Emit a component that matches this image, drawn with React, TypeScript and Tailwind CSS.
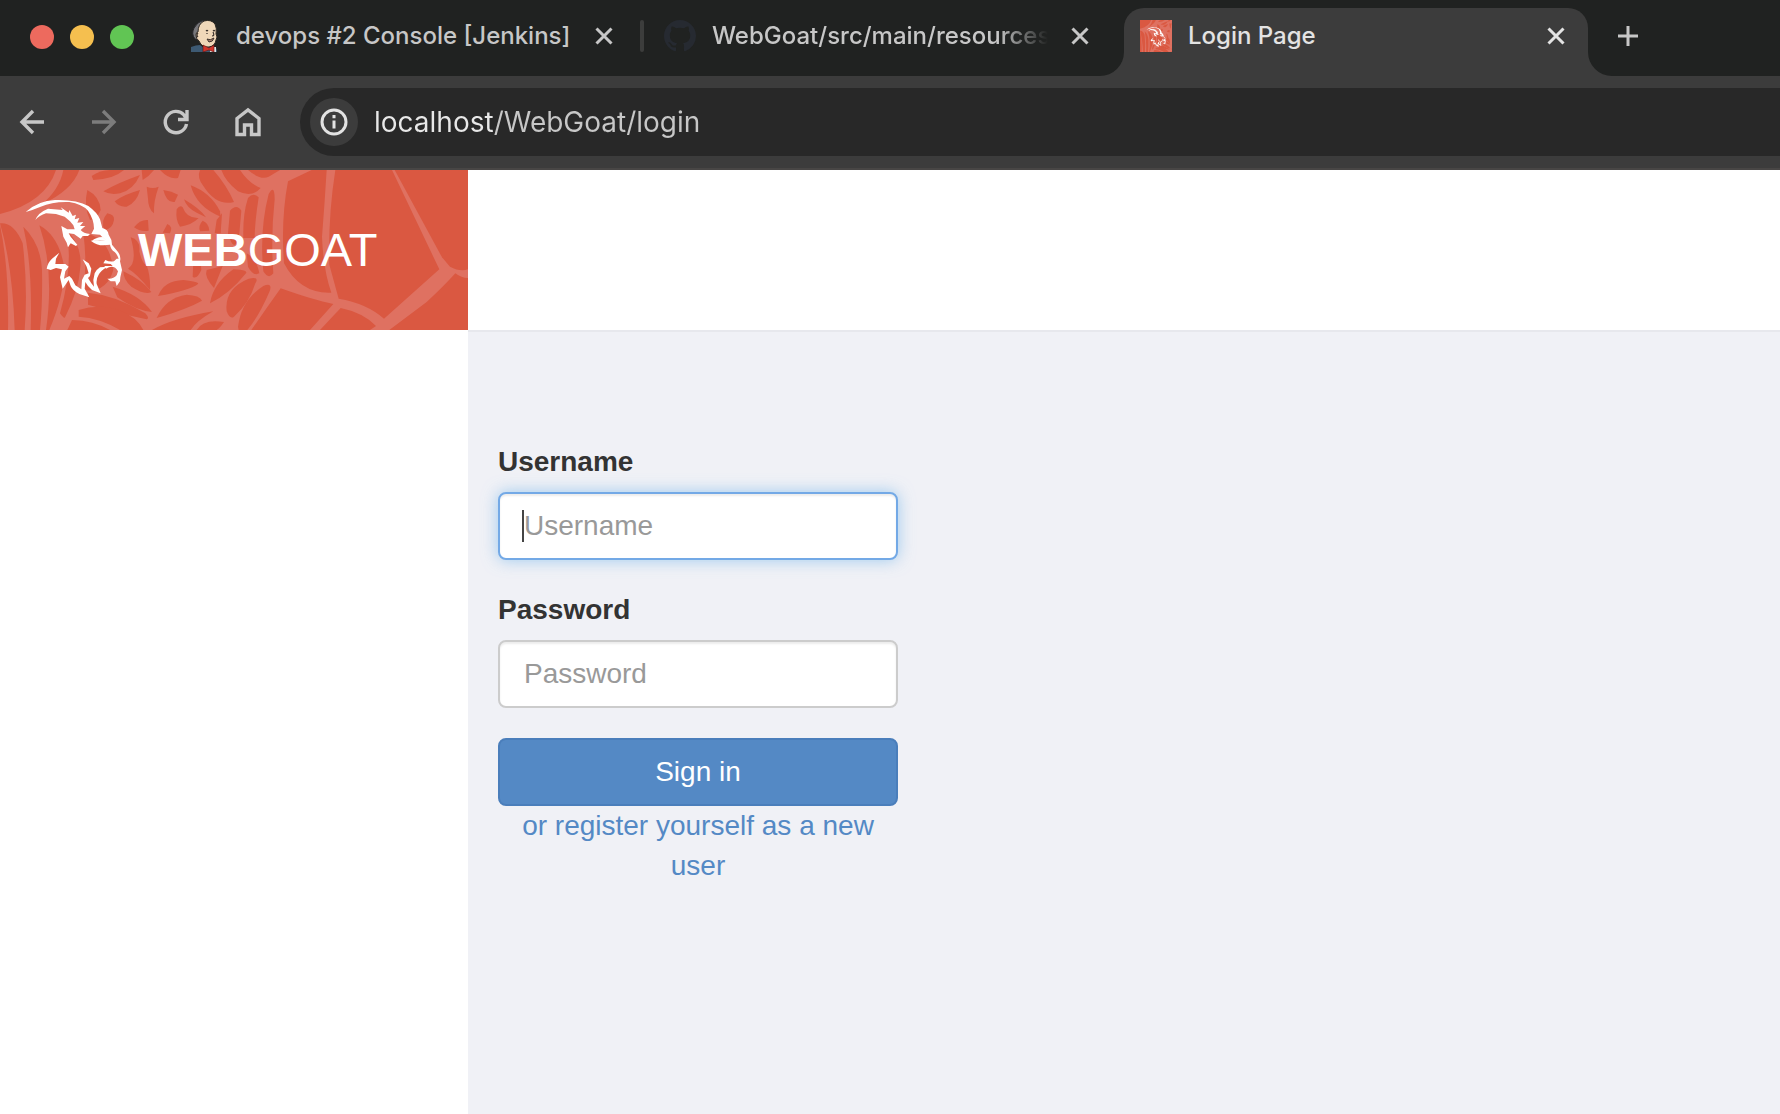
// App.tsx
import React, { useState } from "react";

function JenkinsIcon() {
  return (
    <svg viewBox="0 0 32 32" className="size-8 shrink-0" aria-hidden="true">
      <path d="M3 32V27Q8 25 12 25L16 28 22 26 27 27Q29 28 29 32Z" fill="#3d5a73" />
      <path d="M7 19Q3 14 6 8Q9 2 16 0L12 9 10 20Z" fill="#77777b" stroke="#26262a" strokeWidth="1" />
      <path
        d="M10 12Q10 4 16 1Q23-1 27 4Q29 8 28 14Q30 17 28 20Q27 26 21 27Q14 28 11 21Q8 19 8 15Q8 12 10 12Z"
        fill="#f0d8b9"
        stroke="#2d2822"
        strokeWidth="1"
      />
      <path d="M10 13Q8 15 10 17M18 11q1-1 2 0M25 11q1-1 2 0M19 13v1M25 12q2 4-1 4" fill="none" stroke="#3a302a" strokeWidth="1.2" />
      <path d="M19 19Q22 21 26 18Q25 22 21 22Z" fill="#b98774" stroke="#3a302a" strokeWidth="1" />
      <path d="M22 27h6v5h-6z" fill="#e6e6e6" />
      <path d="M15 25l6 3 5-3v7l-5-2-6 2z" fill="#d2352c" stroke="#5d1512" strokeWidth=".6" />
    </svg>
  );
}

function GithubIcon() {
  return (
    <svg viewBox="0 0 16 16" className="size-8 shrink-0" fill="#262a31" aria-hidden="true">
      <path d="M8 0C3.58 0 0 3.58 0 8c0 3.54 2.29 6.53 5.47 7.59.4.07.55-.17.55-.38 0-.19-.01-.82-.01-1.49-2.01.37-2.53-.49-2.69-.94-.09-.23-.48-.94-.82-1.13-.28-.15-.68-.52-.01-.53.63-.01 1.08.58 1.23.82.72 1.21 1.87.87 2.33.66.07-.52.28-.87.51-1.07-1.78-.2-3.64-.89-3.64-3.95 0-.87.31-1.59.82-2.15-.08-.2-.36-1.02.08-2.12 0 0 .67-.21 2.2.82.64-.18 1.32-.27 2-.27s1.36.09 2 .27c1.53-1.04 2.2-.82 2.2-.82.44 1.1.16 1.92.08 2.12.51.56.82 1.27.82 2.15 0 3.07-1.87 3.75-3.65 3.95.29.25.54.73.54 1.48 0 1.07-.01 1.93-.01 2.2 0 .21.15.46.55.38A8.01 8.01 0 0 0 16 8c0-4.42-3.58-8-8-8z" />
    </svg>
  );
}

// goat head, drawn on a 330 x 345 grid
function Goat() {
  return (
    <g fill="#fff">
      <path d="M17 66Q55 32 105 30Q170 28 205 48Q232 68 240 88L247 114Q264 118 266 134Q276 148 276 164L294 186Q304 200 300 214L306 240 301 262 300 274 290 288 286 274 272 274 262 266Q280 268 290 256L294 244Q282 222 258 236L253 228 278 228 272 222 250 220 256 210Q268 216 282 214L290 206 296 206Q292 194 284 186Q272 178 270 164L250 166Q230 166 212 152L232 151Q244 152 256 150L240 134 214 132 222 116Q222 88 204 62Q186 42 148 36Q98 34 62 50Q38 60 17 66Z" />
      <path d="M46 90Q54 68 84 56L128 60 122 52 146 68 148 60 158 78 168 74 164 88 178 84 172 98 190 96 180 108 196 108 182 120Q190 130 210 132L204 138 188 138 182 146 162 132 146 130 152 140 172 164 168 168 152 160 144 172 140 158 130 140 124 108 142 118 164 118 160 106 150 94 134 80 108 72 78 70Q58 76 46 90Z" />
      <path d="M118 188L108 206 106 222 136 222 146 230 136 244 132 266 148 258 156 266 166 286 184 298 186 270 194 254 206 250 200 230 188 208 206 220 214 236 210 258 204 264 214 280 222 290 220 270 224 250Q230 238 240 232L262 230Q242 242 236 254Q228 266 230 282L242 310 216 300 204 288 196 276 194 296 208 322 178 312Q158 302 152 288L146 270 128 296 120 262 126 238 108 234 92 240 80 236Q84 216 96 206Z" />
      <path d="M216 153Q226 142 248 141L258 150Z" />
    </g>
  );
}

// spider web banner on a 1404 x 480 grid: light red base with darker cells
function WebBackground() {
  return (
    <>
      <rect width="1404" height="480" fill="#df7161" />
      <g fill="#da5841">
        <path d="M0 0H168Q136 98 0 132Z" />
        <path d="M190 0H238Q216 62 124 104Q178 60 190 0Z" />
        <path d="M0 165Q28 300 24 480H0Z" />
        <path d="M0 160Q42 156 68 220Q84 350 74 480H44Q38 290 0 160Z" />
        <path d="M70 170Q122 220 126 300Q128 400 120 480H92Q98 290 70 170Z" />
        <path d="M118 166Q180 200 194 300Q190 380 148 480H138Q164 300 118 166Z" />
        <path d="M200 180Q250 230 240 300Q236 360 196 440Q194 450 180 430Q220 290 200 180Z" />
        <path d="M250 190Q330 200 340 300Q320 370 250 360Q262 280 250 190Z" />
        <path d="M262 60Q300 80 302 120Q290 150 270 150Q250 110 262 60Z" />
        <path d="M275 18Q300 0 330 0H372Q340 28 280 30Z" />
        <path d="M310 64Q350 40 420 15Q400 60 360 70Q330 76 310 64Z" />
        <path d="M344 94Q370 74 420 60Q410 98 380 110Q356 112 344 94Z" />
        <path d="M440 50Q458 58 476 50Q460 94 462 130Q444 116 444 86Z" />
        <path d="M490 60Q516 64 534 74L524 96Q500 100 490 60Z" />
        <path d="M425 0H462Q448 18 428 30Z" />
        <path d="M480 0H542L534 24Q508 30 480 0Z" />
        <path d="M530 118Q540 104 548 112Q560 146 596 144Q574 166 540 170Q526 152 530 118Z" />
        <path d="M552 88Q600 116 618 142L590 128Q560 114 552 88Z" />
        <path d="M572 46Q632 68 660 124L662 140Q590 112 572 46Z" />
        <path d="M600 0H640Q680 46 702 96Q650 110 610 48Q590 22 600 0Z" />
        <path d="M664 0H720Q746 40 782 54Q756 84 714 64Q676 34 664 0Z" />
        <path d="M744 0H840L806 20Q782 32 744 0Z" />
        <path d="M402 172Q420 148 444 150L446 182Q420 186 402 172Z" />
        <path d="M322 130Q344 134 342 150Q338 176 314 180Q300 154 322 130Z" />
        <path d="M392 202Q422 210 418 244Q426 280 440 286Q452 320 450 360Q410 310 384 296Q414 278 392 202Z" />
        <path d="M502 162Q520 170 510 190L488 188Z" />
        <path d="M608 152Q626 158 628 182L600 184Q594 166 608 152Z" />
        <path d="M650 150L666 130 662 190H644Z" />
        <path d="M690 122Q710 100 724 122L718 190Q704 260 684 190Z" />
        <path d="M744 84Q760 66 776 82Q764 160 764 204H730Q728 132 744 84Z" />
        <path d="M806 72Q824 40 824 88Q812 200 820 310Q806 330 790 304Q778 180 806 72Z" />
        <path d="M740 250Q770 266 778 310Q760 320 744 290Z" />
        <path d="M580 274Q606 272 604 300Q590 330 578 320Z" />
        <path d="M620 300L668 288 642 354Q612 320 620 300Z" />
        <path d="M474 378Q492 332 550 330Q600 336 594 342Q568 362 474 378Z" />
        <path d="M370 304Q430 332 454 366Q434 376 394 350Q370 330 370 304Z" />
        <path d="M338 350Q420 374 456 426Q408 422 352 382Z" />
        <path d="M470 444Q498 382 560 374Q600 376 606 392Q560 418 470 444Z" />
        <path d="M264 368Q350 376 436 430Q450 446 440 448Q350 430 264 404Z" />
        <path d="M236 420Q300 400 362 422Q412 442 430 480H360Q300 444 236 440Z" />
        <path d="M216 450Q280 452 330 480H202Z" />
        <path d="M456 480Q520 444 640 424Q590 452 572 480Z" />
        <path d="M590 480Q610 446 672 456Q660 474 650 480Z" />
        <path d="M630 400Q640 340 700 298Q750 300 736 312Q690 370 630 400Z" />
        <path d="M680 424Q672 356 746 326Q780 318 766 340Q748 400 702 440Q690 450 680 424Z" />
        <path d="M714 470Q724 390 790 348Q820 336 808 366Q776 440 742 480H716Z" />
        <path d="M842 355Q940 390 1000 402L930 480H754Q800 414 842 355Z" />
        <path d="M864 34L935 0H980Q974 100 966 200Q970 300 994 368Q900 372 852 280Q842 150 864 34Z" />
        <path d="M1006 0H1176L1318 298 1152 446Q1100 400 1016 386L988 284Q984 140 1006 0Z" />
        <path d="M1184 0H1404V298Q1380 306 1350 290L1326 262Z" />
        <path d="M1366 310Q1384 324 1404 324V480H1168L1280 396Q1330 350 1366 310Z" />
        <path d="M1022 414Q1090 428 1128 468L1110 480H960Z" />
      </g>
    </>
  );
}

function GoatFavicon() {
  return (
    <svg viewBox="0 0 480 480" className="size-8 shrink-0" aria-hidden="true">
      <WebBackground />
      <g transform="translate(80 80)">
        <Goat />
      </g>
    </svg>
  );
}

function CloseButton({ label }: { label: string }) {
  return (
    <button type="button" aria-label={label} className="size-6 shrink-0">
      <svg viewBox="0 0 24 24" className="size-6" fill="none" stroke="currentColor" strokeWidth="3">
        <path d="M4.500 4.500l15 15M19.500 4.500l-15 15" />
      </svg>
    </button>
  );
}

function TabBar() {
  return (
    <div className="flex h-[76px] items-end overflow-hidden bg-[#202221]">
      <div className="flex h-full w-[172px] shrink-0 items-center gap-4 pb-[2px] pl-[30px]">
        <span className="size-6 rounded-full bg-[#ed6a5e]" />
        <span className="size-6 rounded-full bg-[#f5bf4f]" />
        <span className="size-6 rounded-full bg-[#61c554]" />
      </div>

      <div className="flex h-[68px] w-[476px] shrink-0 items-center pb-3 pl-4 text-[#c7c7c7]">
        <JenkinsIcon />
        <button type="button" className="ml-4 flex-1 text-left text-2xl font-medium whitespace-nowrap">
          devops #2 Console [Jenkins]
        </button>
        <CloseButton label="Close devops tab" />
        <span className="mr-1 ml-6 h-8 w-1 rounded-full bg-[#3c3d3c]" />
      </div>

      <div className="flex h-[68px] w-[476px] shrink-0 items-center pr-8 pb-3 pl-4 text-[#c7c7c7]">
        <GithubIcon />
        <button
          type="button"
          className="mr-5 ml-4 flex-1 overflow-hidden mask-r-from-85% text-left text-2xl font-medium whitespace-nowrap"
        >
          WebGoat/src/main/resources
        </button>
        <CloseButton label="Close WebGoat tab" />
      </div>

      <div className="relative flex h-[68px] w-[464px] shrink-0 items-center rounded-t-[20px] bg-[#3c3c3c] pr-5 pb-3 pl-4 text-[#e3e3e3]">
        <svg viewBox="0 0 24 24" className="absolute bottom-0 -left-6 size-6" fill="#3c3c3c" aria-hidden="true">
          <path d="M24 0V24H0A24 24 0 0 0 24 0Z" />
        </svg>
        <svg viewBox="0 0 24 24" className="absolute -right-6 bottom-0 size-6" fill="#3c3c3c" aria-hidden="true">
          <path d="M0 0V24H24A24 24 0 0 1 0 0Z" />
        </svg>
        <GoatFavicon />
        <button type="button" className="ml-4 flex-1 text-left text-2xl font-medium whitespace-nowrap">
          Login Page
        </button>
        <CloseButton label="Close login tab" />
      </div>

      <button type="button" aria-label="New tab" className="mb-7 ml-7 text-[#c7c7c7]">
        <svg viewBox="0 0 24 24" className="size-6" fill="none" stroke="currentColor" strokeWidth="3">
          <path d="M12 2v20M2 12h20" />
        </svg>
      </button>
    </div>
  );
}

function ToolButton({ label, color, children }: { label: string; color: string; children: React.ReactNode }) {
  return (
    <button type="button" aria-label={label} className={`flex size-12 shrink-0 items-center justify-center ${color}`}>
      <svg viewBox="0 0 32 32" className="size-8" fill="none" stroke="currentColor" strokeWidth="3.4">
        {children}
      </svg>
    </button>
  );
}

function Toolbar() {
  const [url, setUrl] = useState("localhost/WebGoat/login");

  return (
    <div className="flex h-[94px] items-center gap-6 border-b-2 border-[#484645] bg-[#3c3c3c] pl-2">
      <ToolButton label="Back" color="text-[#c7c7c7]">
        <path d="M28 16H6M17 5L6 16l11 11" />
      </ToolButton>
      <ToolButton label="Forward" color="text-[#7c7c7c]">
        <path d="M4 16h22M15 5l11 11-11 11" />
      </ToolButton>
      <ToolButton label="Reload" color="text-[#c7c7c7]">
        <path d="M26.500 18A10.700 10.700 0 1 1 24 9L26 12M27 4v9.500h-9" />
      </ToolButton>
      <ToolButton label="Home" color="text-[#c7c7c7]">
        <path d="M5 28.500V12.500L16 4l11 8.500v16h-7.500V19h-7v9.500Z" />
      </ToolButton>
      <div className="ml-1 flex h-[68px] flex-1 items-center rounded-l-full bg-[#282828] pl-[10px]">
        <button
          type="button"
          aria-label="View site information"
          className="flex size-12 shrink-0 items-center justify-center rounded-full bg-[#3c3c3c] text-[#e3e3e3]"
        >
          <svg viewBox="0 0 32 32" className="size-8" fill="none" stroke="currentColor" strokeWidth="3">
            <circle cx="16" cy="16" r="12" />
            <path d="M16 14.500v8M16 9v3.200" />
          </svg>
        </button>
        <input
          type="text"
          aria-label="Address"
          value={url}
          onChange={(e) => setUrl(e.target.value)}
          className="ml-4 min-w-0 flex-1 bg-[linear-gradient(90deg,#e8e8e8_120px,#c7c7c7_120px)] bg-clip-text text-[28px] text-transparent outline-none"
        />
      </div>
    </div>
  );
}

function Brand() {
  return (
    <a href="/WebGoat" className="relative flex h-40 items-center overflow-hidden pl-[138px]">
      <svg viewBox="0 0 1404 480" className="absolute inset-0 h-full w-full" preserveAspectRatio="xMinYMin slice" aria-hidden="true">
        <WebBackground />
        <g transform="translate(60 60)">
          <Goat />
        </g>
      </svg>
      <span className="relative text-[47px] text-white">
        <b className="font-bold">WEB</b>GOAT
      </span>
    </a>
  );
}

const inputBase =
  "h-[68px] w-full rounded-lg border-2 bg-white px-6 text-[28px] text-[#555] outline-none placeholder:text-[#999]";

function LoginForm() {
  const [username, setUsername] = useState("");
  const [password, setPassword] = useState("");

  return (
    <form className="w-[400px] text-[28px] leading-10" onSubmit={(e) => e.preventDefault()}>
      <label htmlFor="username" className="mb-[10px] block font-bold text-[#333]">
        Username
      </label>
      <div className="relative mb-[30px]">
        <input
          id="username"
          type="text"
          placeholder="Username"
          value={username}
          onChange={(e) => setUsername(e.target.value)}
          className={`${inputBase} border-[#73a9e6] shadow-[inset_0_2px_2px_rgba(0,0,0,0.075),0_0_16px_rgba(102,175,233,0.6)]`}
        />
        {username === "" && <span className="absolute top-[18px] left-6 h-8 w-[2px] bg-[#444]" />}
      </div>
      <label htmlFor="password" className="mb-[10px] block font-bold text-[#333]">
        Password
      </label>
      <input
        id="password"
        type="password"
        placeholder="Password"
        value={password}
        onChange={(e) => setPassword(e.target.value)}
        className={`${inputBase} mb-[30px] border-[#ccc] shadow-[inset_0_2px_2px_rgba(0,0,0,0.075)]`}
      />
      <button type="submit" className="block h-[68px] w-full rounded-lg border-2 border-[#4a7ebb] bg-[#5489c5] text-white">
        Sign in
      </button>
      <a href="/WebGoat/registration" className="block text-center text-[#5489c5]">
        or register yourself as a new user
      </a>
    </form>
  );
}

export default function App() {
  return (
    <div className="flex min-h-screen flex-col font-['Liberation_Sans',Arial,sans-serif]">
      <div className="font-['Inter','Roboto',sans-serif]">
        <TabBar />
        <Toolbar />
      </div>
      <div className="flex flex-1">
        <aside className="w-[468px] shrink-0 bg-white">
          <Brand />
        </aside>
        <div className="flex flex-1 flex-col bg-[#f0f1f6]">
          <header className="h-[162px] border-b-2 border-[#e7e8ed] bg-white" />
          <main className="px-[30px] pt-[110px]">
            <LoginForm />
          </main>
        </div>
      </div>
    </div>
  );
}
